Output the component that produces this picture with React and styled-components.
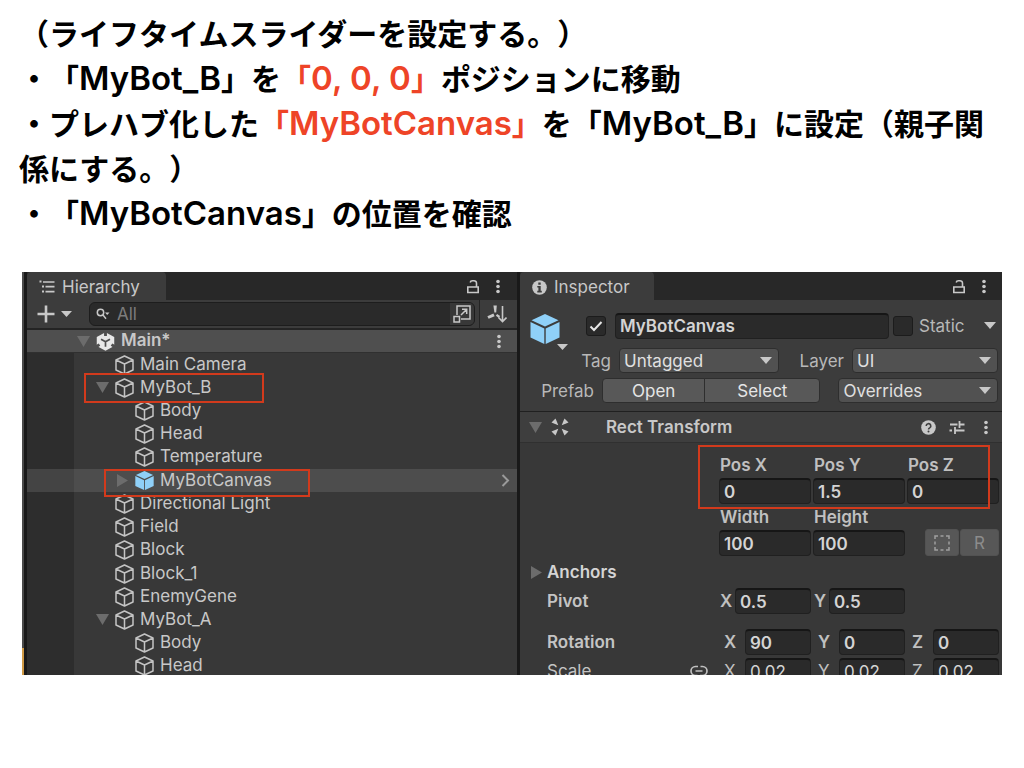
import React from "react";
import styled, { createGlobalStyle, css } from "styled-components";

const UI_FONT = `Inter, "Liberation Sans", sans-serif`;

const GlobalStyle = createGlobalStyle`
  *, *::before, *::after { box-sizing: border-box; }
  body { margin: 0; background: #fff; }
  button, input, select { font: inherit; color: inherit; margin: 0; }
  svg { display: block; flex: none; }
`;

/* ---------- slide ---------- */

const Slide = styled.main`
  padding: 12px 22px 24px;
`;

const Notes = styled.section`
  margin: 0 0 35px -3px;
  font: 600 30px/45px Inter, "Noto Sans CJK JP", sans-serif;
  text-spacing-trim: space-all;
  color: #000;
`;

const Line = styled.p`
  margin: 0;
`;

const Accent = styled.em`
  font-style: normal;
  color: #ee4427;
`;

const Latin = styled.span`
  font-size: 33px;
  line-height: 30px;
`;

const Editor = styled.section`
  display: flex;
  height: 403px;
  overflow: hidden;
  background: #191919;
  color: #c8c8c8;
  font: 400 17px/24px ${UI_FONT};
`;

const SceneEdge = styled.div`
  display: flex;
  flex-direction: column;
  justify-content: flex-end;
  width: 5px;
  border-left: 2px solid #4a4a4a;
`;

const SceneMark = styled.div`
  height: 27px;
  margin-left: -2px;
  width: 2px;
  background: #d09a45;
`;

const Panel = styled.section`
  display: flex;
  flex-direction: column;
  flex: ${(p) => p.$grow} 1 0;
  min-width: 0;
  background: #383838;
  > * { flex-shrink: 0; }
`;

const Splitter = styled.div`
  width: 3px;
  background: #191919;
`;

const TabBar = styled.header`
  display: flex;
  align-items: center;
  height: 28px;
  padding-right: ${(p) => p.$end}px;
  background: #282828;
`;

const Tab = styled.h2`
  display: flex;
  align-items: center;
  gap: 7px;
  width: ${(p) => p.$width}px;
  height: 28px;
  margin: 0 auto 0 0;
  padding: 2px 0 0 12px;
  background: #3c3c3c;
  border-radius: 4px 4px 0 0;
  font-size: 17px;
  font-weight: 400;
`;

const IconButton = styled.button`
  display: flex;
  align-items: center;
  justify-content: center;
  gap: ${(p) => p.$gap || 0}px;
  flex: none;
  width: ${(p) => p.$width || 16}px;
  height: 24px;
  padding: 0;
  border: 0;
  background: none;
  color: #c8c8c8;
`;

/* ---------- hierarchy ---------- */

const Toolbar = styled.div`
  display: flex;
  align-items: center;
  height: 30px;
  padding-left: 10px;
  background: #3c3c3c;
  border-bottom: 2px solid #242424;
`;

const SearchBox = styled.label`
  display: flex;
  align-items: center;
  flex: 1;
  min-width: 0;
  height: 24px;
  margin: 0 4px 0 17px;
  padding-left: 6px;
  gap: 7px;
  background: #2a2a2a;
  border: 1px solid #1d1d1d;
  border-radius: 6px;
  overflow: hidden;
`;

const SearchInput = styled.input`
  flex: 1;
  min-width: 0;
  height: 22px;
  padding: 0;
  border: 0;
  outline: 0;
  background: none;
  &::placeholder { color: #7c7c7c; opacity: 1; }
`;

const SearchScope = styled(IconButton)`
  background: #383838;
`;

const FilterButton = styled(IconButton)`
  height: 28px;
  padding-right: 4px;
  border-left: 1px solid #242424;
`;

const TreeRow = styled.li`
  display: flex;
  align-items: center;
  gap: 6px;
  min-height: 0;
  padding: 0 10px 0 ${(p) => 49 + p.$depth * 20}px;
  position: relative;
  ${(p) => p.$selected && css`
    background: linear-gradient(90deg, #444 47px, #4d4d4d 47px);
  `}
`;

const SceneRow = styled.div`
  display: flex;
  align-items: center;
  gap: 6px;
  height: 23px;
  padding: 0 10px 0 50px;
  background: #4f4f4f;
  border-bottom: 1px solid #303030;
  font-weight: 600;
`;

const Tree = styled.ul`
  display: grid;
  grid-auto-rows: 1fr;
  height: 325px;
  margin: 0;
  padding: 0;
  list-style: none;
  background: linear-gradient(90deg, #2d2d2d 47px, #383838 47px);
`;

const Twisty = styled.span`
  display: flex;
  justify-content: center;
  width: 13px;
  flex: none;
  color: #6c6c6c;
`;

const RowName = styled.span`
  flex: 1;
  white-space: nowrap;
  line-height: 20px;
  padding-bottom: 2px;
`;

/* Red frame drawn over the part of the window under discussion. */
const Frame = styled.span`
  position: absolute;
  z-index: 1;
  border: 2px solid #d23a1c;
  pointer-events: none;
`;

const RowFrame = styled(Frame)`
  left: ${(p) => 37 + p.$depth * 20}px;
  top: ${(p) => p.$top}px;
  width: ${(p) => p.$width}px;
  height: ${(p) => p.$height}px;
`;

const PositionFrame = styled(Frame)`
  left: -21px;
  right: 9px;
  top: -7px;
  height: 64px;
`;

/* ---------- inspector ---------- */

const ObjectHeader = styled.div`
  display: grid;
  grid-template-columns: 42px 1fr;
  row-gap: 5px;
  padding: 13px 4px 8px 10px;
  background: #3c3c3c;
  border-bottom: 1px solid #202020;
`;

const PrefabIcon = styled.button`
  grid-row: span 2;
  display: flex;
  flex-direction: column;
  align-items: flex-end;
  width: 38px;
  padding: 1px 0 0;
  border: 0;
  background: none;
  color: #c8c8c8;
  svg:first-child { align-self: flex-start; }
`;

const HeaderRow = styled.div`
  display: flex;
  align-items: center;
  height: 25px;
  margin-bottom: ${(p) => (p.$first ? 5 : 0)}px;
  padding-left: ${(p) => (p.$first ? 14 : 0)}px;
  grid-column: ${(p) => (p.$wide ? "1 / -1" : "auto")};
`;

const HeaderLabel = styled.label`
  flex: none;
  width: ${(p) => p.$width}px;
  margin-right: 7px;
  padding-right: 1px;
  text-align: right;
  white-space: nowrap;
  color: #b8b8b8;
`;

const TextInput = styled.input`
  flex: 1;
  min-width: 0;
  width: 100%;
  height: 26px;
  padding: 0 4px;
  border: 1px solid #202020;
  border-top: 2px solid #161616;
  border-radius: 4px;
  outline: 0;
  background: #2a2a2a;
  color: #d4d4d4;
  font-weight: ${(p) => (p.$plain ? 400 : 600)};
`;

const NameInput = styled(TextInput)`
  margin: 0 4px 0 9px;
`;

const CheckWrap = styled.span`
  position: relative;
  display: flex;
  flex: none;
  svg { position: absolute; inset: 3px; pointer-events: none; }
`;

const Check = styled.input`
  appearance: none;
  width: 20px;
  height: 20px;
  border: 1px solid #1c1c1c;
  border-radius: 3px;
  background: #2a2a2a;
`;

const StaticGroup = styled.div`
  display: flex;
  align-items: center;
  gap: 6px;
  width: 105px;
  color: #b8b8b8;
`;

const StaticMenu = styled(IconButton)`
  margin-left: auto;
`;

const SelectWrap = styled.span`
  display: flex;
  align-items: center;
  flex: ${(p) => p.$grow} 1 0;
  min-width: 0;
  position: relative;
  svg { position: absolute; right: 7px; pointer-events: none; }
`;

const Select = styled.select`
  appearance: none;
  width: 100%;
  height: 25px;
  padding: 0 4px;
  border: 1px solid #2e2e2e;
  border-radius: 4px;
  outline: 0;
  background: #515151;
  color: #e0e0e0;
`;

const PushButton = styled.button`
  flex: ${(p) => p.$grow} 1 0;
  height: 25px;
  padding: 0;
  border: 1px solid #2e2e2e;
  border-radius: ${(p) => (p.$side === "left" ? "4px 0 0 4px" : "0 4px 4px 0")};
  margin-left: ${(p) => (p.$side === "left" ? 0 : -1)}px;
  background: #585858;
  color: #e6e6e6;
`;

const ButtonPair = styled.div`
  display: flex;
  flex: 219 1 0;
  margin-right: 18px;
`;

const ComponentHeader = styled.header`
  display: flex;
  align-items: center;
  height: 31px;
  padding: 0 8px 0 9px;
  background: #3e3e3e;
  border-bottom: 1px solid #303030;
`;

const ComponentTitle = styled.h3`
  flex: 1;
  margin: 0 0 0 37px;
  font-size: 17px;
  font-weight: 600;
`;

const ComponentIcon = styled.span`
  margin-left: 9px;
`;

const HeaderTools = styled.div`
  display: flex;
  gap: 13px;
`;

const Properties = styled.div`
  padding: 9px 3px 0 0;
`;

const PropertyRow = styled.div`
  display: grid;
  grid-template-columns: 1fr 92px 92px 92px;
  column-gap: 2px;
  align-items: center;
  margin-top: ${(p) => p.$top || 0}px;
`;

const PropertyName = styled.span`
  display: flex;
  align-items: center;
  justify-content: space-between;
  padding: 0 9px 0 27px;
  color: #c4c4c4;
  font-weight: ${(p) => (p.$plain ? 400 : 600)};
`;

const FieldGroup = styled.div`
  grid-column: 2 / -1;
  display: grid;
  grid-template-columns: repeat(3, 92px);
  column-gap: 2px;
  align-items: end;
  position: relative;
`;

const StackedField = styled.label`
  display: flex;
  flex-direction: column;
  height: 52px;
  line-height: 26px;
  font-weight: 600;
  color: #c0c0c0;
  span { padding-left: 1px; }
  input { flex: none; }
`;

const AxisField = styled.label`
  display: flex;
  align-items: center;
  padding-left: ${(p) => (p.$tight ? 1 : 5)}px;
  font-weight: ${(p) => (p.$bold ? 600 : 400)};
  color: #c0c0c0;
  span { flex: none; width: ${(p) => (p.$tight ? 15 : 21)}px; }
`;

const Foldout = styled.button`
  display: flex;
  align-items: center;
  gap: 4px;
  height: 32px;
  padding: 0 0 0 10px;
  border: 0;
  background: none;
  color: #d4d4d4;
  font-weight: 600;
`;

const ModeButtons = styled.div`
  display: flex;
  gap: 1px;
  justify-self: end;
  width: 74px;
`;

const ModeButton = styled.button`
  display: flex;
  align-items: center;
  justify-content: center;
  flex: ${(p) => p.$grow} 1 0;
  height: 27px;
  padding: 0;
  border: 1px solid #525252;
  border-radius: 3px;
  background: #575757;
  color: #8c8c8c;
`;

/* ---------- icons ---------- */

const Down = ({ w = 11, h = 6 }) => (
  <svg width={w} height={h} viewBox="0 0 12 8" preserveAspectRatio="none" fill="currentColor">
    <path d="M0 0h12L6 8z" />
  </svg>
);

const Right = () => (
  <svg width="11" height="13" viewBox="0 0 11 13" fill="currentColor">
    <path d="M0 0l11 6.5L0 13z" />
  </svg>
);

const Cube = () => (
  <svg width="19" height="20" viewBox="0 0 19 20" fill="none" stroke="#c4c4c4" strokeWidth="1.5" strokeLinejoin="round">
    <path d="M9.5 1L18 5v10l-8.500 4L1 15V5zM1 5l8.500 4L18 5M9.500 9v10" />
  </svg>
);

const BlueCube = ({ size = 19 }) => (
  <svg width={size} height={size} viewBox="0 0 30 30" fill="#8fd0f8">
    <path d="M15 0l13.500 6.200L15 12.600 1.500 6.200z" />
    <path d="M0.500 8l13.800 6.500V30L0.500 23.500z" />
    <path d="M29.500 8l-13.800 6.500V30l13.800-6.500z" />
  </svg>
);

const UnityLogo = () => (
  <svg width="19" height="19" viewBox="0 0 20 20">
    <path d="M10 0.300l9.200 5v9.400L10 19.700 0.800 14.700V5.300z" fill="#e8e8e8" />
    <path d="M10 10.300L5.300 7.600M10 10.300l4.700-2.700M10 10.300v5.200" stroke="#4f4f4f" strokeWidth="1.800" fill="none" />
    <path d="M10 0v4.200M0.500 15.200l3.200-1.900M19.500 15.200l-3.200-1.900" stroke="#4f4f4f" strokeWidth="3" fill="none" />
  </svg>
);

const ListIcon = () => (
  <svg width="16" height="14" viewBox="0 0 16 14" fill="#c8c8c8">
    <path d="M0.500 0.500h2v2h-2zM4 1.200h11.500v1.600H4zM3 5.500h2v2H3zM6.500 5.800h9v1.600h-9zM3 10.500h2v2H3zM6.500 10.800h9v1.600h-9z" />
  </svg>
);

const LockIcon = () => (
  <svg width="14" height="15" viewBox="0 0 14 15" fill="none" stroke="currentColor" strokeWidth="1.600">
    <path d="M1.800 8h10.400v5.500H1.800zM10.500 8V4.200A2.500 2.500 0 0 0 8 1.700H6.500A2.300 2.300 0 0 0 4.200 3.500" />
  </svg>
);

const Dots = () => (
  <svg width="4" height="15" viewBox="0 0 4 15" fill="currentColor">
    <circle cx="2" cy="2.500" r="1.800" />
    <circle cx="2" cy="7.500" r="1.800" />
    <circle cx="2" cy="12.500" r="1.800" />
  </svg>
);

const PlusIcon = () => (
  <svg width="18" height="18" viewBox="0 0 18 18" stroke="currentColor" strokeWidth="2.600">
    <path d="M9 0.500v17M0.500 9h17" />
  </svg>
);

const SearchIcon = () => (
  <svg width="14" height="12" viewBox="0 0 14 12" fill="none" stroke="#c8c8c8" strokeWidth="1.500">
    <circle cx="4.500" cy="4.500" r="3.200" />
    <path d="M6.800 6.800l3.200 4" />
    <path d="M9 4.500h4.500L11.200 7z" fill="#c8c8c8" stroke="none" />
  </svg>
);

const ScopeIcon = () => (
  <svg width="18" height="18" viewBox="0 0 18 18" fill="none" stroke="currentColor" strokeWidth="1.500">
    <path d="M4 10V1h13v13H8M1 11.500h5.500V17H1zM8 10l5.500-5.500M9 4.300h4.700V9" />
  </svg>
);

const FilterIcon = () => (
  <svg width="20" height="18" viewBox="0 0 20 18" fill="none" stroke="currentColor">
    <path d="M6.400 0.500h3.400L9.200 7.500H7.400z" fill="currentColor" stroke="none" />
    <path d="M7 9.800L1 12.500" strokeWidth="3" />
    <path d="M9.500 9.800l3 2.200" strokeWidth="2.200" />
    <path d="M15.500 1v15M11.500 12.500l4 4 4-4" strokeWidth="1.600" />
  </svg>
);

const InfoIcon = () => (
  <svg width="15" height="15" viewBox="0 0 15 15">
    <circle cx="7.500" cy="7.500" r="7.300" fill="#c8c8c8" />
    <path d="M6.300 2.500h2.400v2.200H6.300zM5.300 6h3.400v4.800h1.100v1.600H5.300v-1.600h1.100V7.500H5.300z" fill="#3c3c3c" />
  </svg>
);

const CheckIcon = () => (
  <svg width="14" height="14" viewBox="0 0 14 14" fill="none" stroke="#e6e6e6" strokeWidth="2">
    <path d="M1.500 7.500l3.500 3.500 7.500-8" />
  </svg>
);

const RectIcon = () => (
  <svg width="18" height="18" viewBox="0 0 18 18" fill="#c8c8c8">
    <path d="M0.500 4.500L4.500 0.500 5.800 3.500 7.300 7.300 3.500 5.800zM17.500 4.500L13.500 0.500 12.200 3.500 10.700 7.300 14.500 5.800zM0.500 13.500L4.500 17.500 5.800 14.500 7.300 10.700 3.500 12.200zM17.500 13.500L13.500 17.500 12.200 14.500 10.700 10.700 14.500 12.200z" />
  </svg>
);

const HelpIcon = () => (
  <svg width="15" height="15" viewBox="0 0 15 15">
    <circle cx="7.500" cy="7.500" r="7.300" fill="#c8c8c8" />
    <path d="M5.200 6a2.300 2.300 0 1 1 3.500 1.900c-.9.500-1.200.8-1.200 1.700" fill="none" stroke="#3e3e3e" strokeWidth="1.600" />
    <circle cx="7.500" cy="11.600" r="1" fill="#3e3e3e" />
  </svg>
);

const PresetIcon = () => (
  <svg width="16" height="15" viewBox="0 0 16 15" fill="none" stroke="currentColor" strokeWidth="1.800">
    <path d="M1 4.500h7.500M10.500 4.500h5M10.500 1v7M0.500 10.500H3M6 10.500h9.500M6 7v7" />
  </svg>
);

const LinkIcon = () => (
  <svg width="18" height="12" viewBox="0 0 18 12" fill="none" stroke="#c0c0c0" strokeWidth="1.700">
    <path d="M7.500 10.500h-2a4.500 4.500 0 0 1 0-9h2.500M10.500 1.500h2a4.500 4.500 0 0 1 0 9H10M5.500 6h7" />
  </svg>
);

const DashedIcon = () => (
  <svg width="16" height="16" viewBox="0 0 16 16" fill="none" stroke="#a0a0a0" strokeWidth="1.500">
    <path d="M1 4V1h3M6.500 1h3M12 1h3v3M15 6.500v3M15 12v3h-3M9.500 15h-3M4 15H1v-3M1 9.500v-3" />
  </svg>
);

const Chevron = () => (
  <svg width="9" height="13" viewBox="0 0 9 13" fill="none" stroke="#9a9a9a" strokeWidth="2">
    <path d="M1.500 1l5.500 5.500L1.500 12" />
  </svg>
);

/* ---------- data ---------- */

const OBJECTS = [
  { name: "Main Camera", depth: 1 },
  { name: "MyBot_B", depth: 1, open: true, frame: { width: 180, height: 30, top: -3 } },
  { name: "Body", depth: 2 },
  { name: "Head", depth: 2 },
  { name: "Temperature", depth: 2 },
  { name: "MyBotCanvas", depth: 2, open: false, prefab: true, selected: true, frame: { width: 206, height: 28, top: 0 } },
  { name: "Directional Light", depth: 1 },
  { name: "Field", depth: 1 },
  { name: "Block", depth: 1 },
  { name: "Block_1", depth: 1 },
  { name: "EnemyGene", depth: 1 },
  { name: "MyBot_A", depth: 1, open: true },
  { name: "Body", depth: 2 },
  { name: "Head", depth: 2 },
];

const Hierarchy = () => (
  <Panel $grow={490}>
    <TabBar $end={11}>
      <Tab $width={139}><ListIcon />Hierarchy</Tab>
      <IconButton aria-label="Lock" $width={34}><LockIcon /></IconButton>
      <IconButton aria-label="Options"><Dots /></IconButton>
    </TabBar>
    <Toolbar>
      <IconButton aria-label="Create" $width={35} $gap={6}><PlusIcon /><Down /></IconButton>
      <SearchBox>
        <SearchIcon />
        <SearchInput type="text" placeholder="All" aria-label="Search" />
        <SearchScope aria-label="Search window" $width={24}><ScopeIcon /></SearchScope>
      </SearchBox>
      <FilterButton aria-label="Sort" $width={38}><FilterIcon /></FilterButton>
    </Toolbar>
    <SceneRow>
      <Twisty><Down w={13} h={11} /></Twisty>
      <UnityLogo />
      <RowName>Main*</RowName>
      <IconButton aria-label="Scene options"><Dots /></IconButton>
    </SceneRow>
    <Tree>
      {OBJECTS.map((o, i) => (
        <TreeRow key={i} $depth={o.depth} $selected={o.selected}>
          <Twisty>
            {o.open === true && <Down w={13} h={11} />}
            {o.open === false && <Right />}
          </Twisty>
          {o.prefab ? <BlueCube /> : <Cube />}
          <RowName>{o.name}</RowName>
          {o.prefab && <IconButton aria-label="Open prefab" $width={3}><Chevron /></IconButton>}
          {o.frame && (
            <RowFrame
              $depth={o.depth}
              $width={o.frame.width}
              $height={o.frame.height}
              $top={o.frame.top}
            />
          )}
        </TreeRow>
      ))}
    </Tree>
  </Panel>
);

const Stacked = ({ label, value }) => (
  <StackedField>
    <span>{label}</span>
    <TextInput defaultValue={value} />
  </StackedField>
);

const Axis = ({ axis, value, tight, plain }) => (
  <AxisField $tight={tight} $bold={!plain}>
    <span>{axis}</span>
    <TextInput defaultValue={value} $plain={plain} />
  </AxisField>
);

const Inspector = () => (
  <Panel $grow={482}>
    <TabBar $end={10}>
      <Tab $width={134}><InfoIcon />Inspector</Tab>
      <IconButton aria-label="Lock" $width={34}><LockIcon /></IconButton>
      <IconButton aria-label="Options"><Dots /></IconButton>
    </TabBar>
    <ObjectHeader>
      <PrefabIcon aria-label="Icon"><BlueCube size={30} /><Down /></PrefabIcon>
      <HeaderRow $first>
        <CheckWrap>
          <Check type="checkbox" defaultChecked aria-label="Active" />
          <CheckIcon />
        </CheckWrap>
        <NameInput defaultValue="MyBotCanvas" aria-label="Name" />
        <StaticGroup>
          <Check type="checkbox" id="static" />
          <label htmlFor="static">Static</label>
          <StaticMenu aria-label="Static options"><Down w={12} h={7} /></StaticMenu>
        </StaticGroup>
      </HeaderRow>
      <HeaderRow>
        <HeaderLabel htmlFor="tag" $width={40}>Tag</HeaderLabel>
        <SelectWrap $grow={160}>
          <Select id="tag"><option>Untagged</option></Select>
          <Down w={12} h={7} />
        </SelectWrap>
        <HeaderLabel htmlFor="layer" $width={66}>Layer</HeaderLabel>
        <SelectWrap $grow={146}>
          <Select id="layer"><option>UI</option></Select>
          <Down w={12} h={7} />
        </SelectWrap>
      </HeaderRow>
      <HeaderRow $wide>
        <HeaderLabel as="span" $width={65}>Prefab</HeaderLabel>
        <ButtonPair>
          <PushButton $side="left" $grow={103}>Open</PushButton>
          <PushButton $side="right" $grow={116}>Select</PushButton>
        </ButtonPair>
        <SelectWrap $grow={160}>
          <Select aria-label="Overrides"><option>Overrides</option></Select>
          <Down w={12} h={7} />
        </SelectWrap>
      </HeaderRow>
    </ObjectHeader>
    <ComponentHeader>
      <Twisty><Down w={13} h={11} /></Twisty>
      <ComponentIcon><RectIcon /></ComponentIcon>
      <ComponentTitle>Rect Transform</ComponentTitle>
      <HeaderTools>
        <IconButton aria-label="Help"><HelpIcon /></IconButton>
        <IconButton aria-label="Presets"><PresetIcon /></IconButton>
        <IconButton aria-label="Component options"><Dots /></IconButton>
      </HeaderTools>
    </ComponentHeader>
    <Properties>
      <PropertyRow>
        <FieldGroup>
          <Stacked label="Pos X" value="0" />
          <Stacked label="Pos Y" value="1.5" />
          <Stacked label="Pos Z" value="0" />
          <PositionFrame />
        </FieldGroup>
      </PropertyRow>
      <PropertyRow>
        <FieldGroup>
          <Stacked label="Width" value="100" />
          <Stacked label="Height" value="100" />
          <ModeButtons>
            <ModeButton $grow={33} aria-label="Blueprint mode"><DashedIcon /></ModeButton>
            <ModeButton $grow={38}>R</ModeButton>
          </ModeButtons>
        </FieldGroup>
      </PropertyRow>
      <Foldout><Twisty><Right /></Twisty>Anchors</Foldout>
      <PropertyRow>
        <PropertyName>Pivot</PropertyName>
        <Axis axis="X" value="0.5" tight />
        <Axis axis="Y" value="0.5" tight />
      </PropertyRow>
      <PropertyRow $top={15}>
        <PropertyName>Rotation</PropertyName>
        <Axis axis="X" value="90" />
        <Axis axis="Y" value="0" />
        <Axis axis="Z" value="0" />
      </PropertyRow>
      <PropertyRow $top={3}>
        <PropertyName $plain>Scale<LinkIcon /></PropertyName>
        <Axis axis="X" value="0.02" plain />
        <Axis axis="Y" value="0.02" plain />
        <Axis axis="Z" value="0.02" plain />
      </PropertyRow>
    </Properties>
  </Panel>
);

export default function App() {
  return (
    <Slide>
      <GlobalStyle />
      <Notes lang="ja">
        <Line>（ライフタイムスライダーを設定する。）</Line>
        <Line>・「<Latin>MyBot_B</Latin>」を<Accent>「<Latin>0, 0, 0</Latin>」</Accent>ポジションに移動</Line>
        <Line>
          ・プレハブ化した<Accent>「<Latin>MyBotCanvas</Latin>」</Accent>を「<Latin>MyBot_B</Latin>」に設定（親子関<br />
          係にする。）
        </Line>
        <Line>・「<Latin>MyBotCanvas</Latin>」の位置を確認</Line>
      </Notes>
      <Editor>
        <SceneEdge><SceneMark /></SceneEdge>
        <Hierarchy />
        <Splitter />
        <Inspector />
      </Editor>
    </Slide>
  );
}
